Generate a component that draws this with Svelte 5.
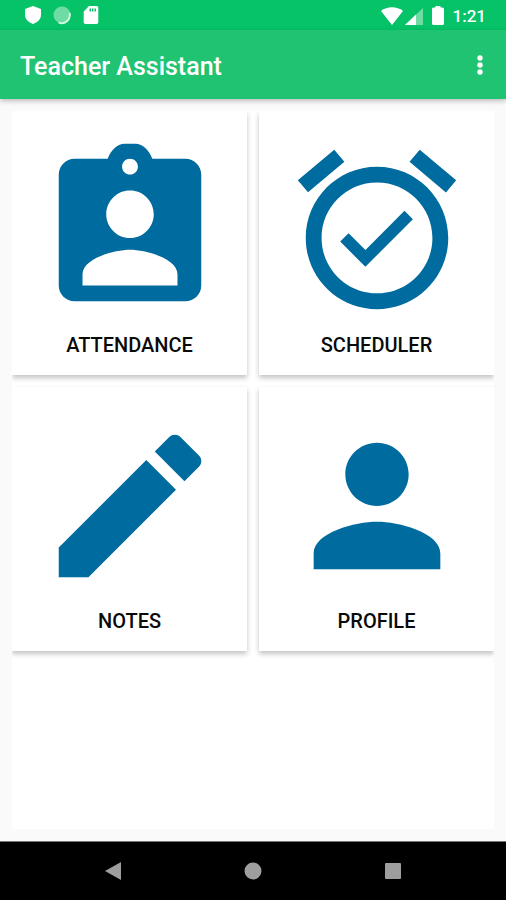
<script>
  const cards = [
    {
      label: 'ATTENDANCE',
      path: 'M19 3h-4.18C14.4 1.84 13.5 1.1 12.7 1.1h-1.4c-.8 0-1.7.74-2.12 1.9H5c-1.1 0-2 .9-2 2v14c0 1.1.9 2 2 2h14c1.1 0 2-.9 2-2V5c0-1.1-.9-2-2-2zm-7 0c.55 0 1 .45 1 1s-.45 1-1 1-1-.45-1-1 .45-1 1-1zm0 4c1.66 0 3 1.34 3 3s-1.34 3-3 3-3-1.34-3-3 1.34-3 3-3zm6 12H6v-1.4c0-2 4-3.1 6-3.1s6 1.1 6 3.1V19z'
    },
    {
      label: 'SCHEDULER',
      path: 'M22 5.72l-4.6-3.86-1.29 1.53 4.6 3.86L22 5.72zM7.88 3.39L6.6 1.86 2 5.71l1.29 1.53 4.59-3.85zM12 4c-4.97 0-9 4.03-9 9s4.02 9 9 9c4.97 0 9-4.03 9-9s-4.03-9-9-9zm0 16c-3.87 0-7-3.13-7-7s3.13-7 7-7 7 3.13 7 7-3.13 7-7 7zm-1.46-5.47L8.41 12.4l-1.06 1.06 3.18 3.18 6-6-1.06-1.06-4.93 4.95z'
    },
    {
      label: 'NOTES',
      path: 'M3 17.25V21h3.75L17.81 9.94l-3.75-3.75L3 17.25zM20.71 7.04c.39-.39.39-1.02 0-1.41l-2.34-2.34c-.39-.39-1.02-.39-1.41 0l-1.83 1.83 3.75 3.75 1.83-1.83z'
    },
    {
      label: 'PROFILE',
      path: 'M12 12c2.21 0 4-1.79 4-4s-1.79-4-4-4-4 1.79-4 4 1.79 4 4 4zm0 2c-2.67 0-8 1.34-8 4v2h16v-2c0-2.66-5.33-4-8-4z'
    }
  ];
</script>

<div class="screen">
  <div class="status">
    <div class="notices">
      <svg width="16" height="20" viewBox="0 0 16 20" aria-hidden="true">
        <path d="M8 1l8 3v6c0 4-3.500 7.500-8 9-4.500-1.500-8-5-8-9V4z" fill="#fff" />
      </svg>
      <svg width="18" height="20" viewBox="0 0 18 20" aria-hidden="true">
        <circle cx="9" cy="10" r="8.500" fill="#6fdda3" />
        <path d="M16.500 8a8 8 0 0 1-11 9.500" fill="none" stroke="#d8f7e6" stroke-width="1.800" />
      </svg>
      <svg width="16" height="20" viewBox="0 0 16 20" aria-hidden="true">
        <path fill-rule="evenodd" d="M6 1H13.500a1.800 1.800 0 0 1 1.800 1.800v14.400a1.800 1.800 0 0 1-1.800 1.800H2.500a1.800 1.800 0 0 1-1.800-1.800V6.500zM6.500 3.500v3h1.500v-3zM9 3.500v3h1.500v-3zM11.500 3.500v3h1.500v-3z" fill="#fff" />
      </svg>
    </div>
    <div class="system">
      <svg width="22" height="18" viewBox="0 0 22 18" aria-hidden="true">
        <path d="M11 18L0 4C6-1 16-1 22 4z" fill="#fff" />
      </svg>
      <svg width="18" height="18" viewBox="0 0 18 18" aria-hidden="true">
        <path d="M0 18L18 1V18z" fill="#6fdda3" />
        <path d="M0 18L11 7.500V18z" fill="#fff" />
      </svg>
      <svg class="battery" width="12" height="20" viewBox="0 0 12 20" aria-hidden="true">
        <path d="M3.500 0h5v1.500H10.500a1.500 1.500 0 0 1 1.500 1.500v14.500a1.500 1.500 0 0 1-1.500 1.500H1.500a1.500 1.500 0 0 1-1.500-1.500V3A1.500 1.500 0 0 1 1.500 1.500h2z" fill="#fff" />
      </svg>
      <span class="time">1:21</span>
    </div>
  </div>

  <header>
    <h1>Teacher Assistant</h1>
    <button class="more" aria-label="More options">
      <svg width="8" height="22" viewBox="0 0 8 22" aria-hidden="true">
        <circle cx="4" cy="4" r="2.700" /><circle cx="4" cy="11" r="2.700" /><circle cx="4" cy="18" r="2.700" />
      </svg>
    </button>
  </header>

  <main>
    <div class="panel">
      {#each cards as card}
        <button class="card">
          <svg viewBox="0 0 24 24" aria-hidden="true"><path d={card.path} /></svg>
          <span>{card.label}</span>
        </button>
      {/each}
    </div>
  </main>

  <nav>
    <button aria-label="Back">
      <svg width="18" height="18" viewBox="0 0 18 18" aria-hidden="true"><path d="M17 0v18L1 9z" /></svg>
    </button>
    <button aria-label="Home">
      <svg width="18" height="18" viewBox="0 0 18 18" aria-hidden="true"><circle cx="9" cy="9" r="8.500" /></svg>
    </button>
    <button aria-label="Recent apps">
      <svg width="18" height="18" viewBox="0 0 18 18" aria-hidden="true"><rect x="1" y="1" width="16" height="16" rx="1" /></svg>
    </button>
  </nav>
</div>

<style>
  :global(body) {
    margin: 0;
  }
  .screen {
    display: flex;
    flex-direction: column;
    min-height: 100vh;
    background: #fafafa;
    font-family: Roboto, "Liberation Sans", sans-serif;
  }
  button {
    margin: 0;
    padding: 0;
    border: 0;
    background: none;
    font: inherit;
    cursor: pointer;
  }
  svg {
    display: block;
  }
  .status {
    display: flex;
    justify-content: space-between;
    align-items: center;
    height: 30px;
    padding: 0 20px 0 25px;
    background: #05c366;
  }
  .notices {
    display: flex;
    gap: 12px;
  }
  .system {
    display: flex;
    align-items: center;
    gap: 2px;
    padding-top: 1px;
  }
  .battery {
    margin: 0 7px;
  }
  .time {
    color: #fff;
    font-size: 17px;
    font-weight: 500;
    line-height: 28px;
  }
  header {
    position: relative;
    display: flex;
    justify-content: space-between;
    align-items: center;
    height: 69px;
    padding: 0 14px 0 20px;
    background: #1fc372;
    box-shadow: 0 2px 5px rgba(0, 0, 0, 0.25);
  }
  h1 {
    margin: 0;
    padding-top: 3px;
    color: #fff;
    font-size: 25px;
    font-weight: 500;
  }
  .more {
    display: flex;
    justify-content: center;
    width: 24px;
  }
  .more svg {
    fill: #fff;
  }
  main {
    flex: 1;
    display: flex;
    padding: 12px;
  }
  .panel {
    flex: 1;
    display: grid;
    grid-template-columns: 1fr 1fr;
    gap: 12px;
    align-content: start;
    overflow: hidden;
    background: #fff;
  }
  .card {
    display: flex;
    flex-direction: column;
    align-items: center;
    padding: 24px 20px 18px;
    background: #fff;
    box-shadow: 0 3px 5px rgba(0, 0, 0, 0.24);
  }
  .card svg {
    width: 100%;
    max-width: 190px;
    fill: #006b9f;
  }
  .card span {
    margin-top: 8px;
    color: #0a0a0a;
    font-size: 20px;
    font-weight: 500;
    line-height: 24px;
  }
  nav {
    display: flex;
    justify-content: center;
    gap: 92px;
    height: 58px;
    border-top: 1px solid #777;
    background: #000;
  }
  nav button {
    display: flex;
    align-items: center;
    justify-content: center;
    width: 48px;
  }
  nav svg {
    fill: #9e9e9e;
  }
</style>
